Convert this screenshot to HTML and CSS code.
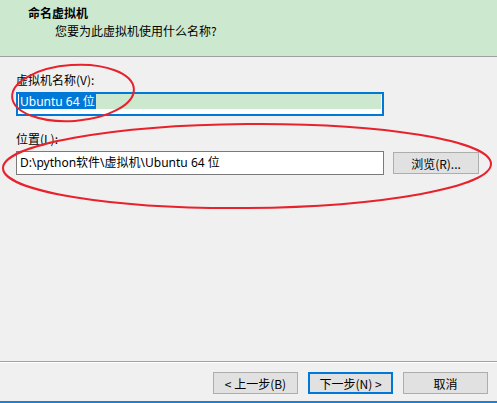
FILE: index.html
```html
<!DOCTYPE html>
<html lang="zh-CN">
<head>
<meta charset="utf-8">
<link rel="stylesheet" href="styles.css">
</head>
<body>
<div class="win">
  <div class="header">
    <div class="title">命名虚拟机</div>
    <div class="subtitle">您要为此虚拟机使用什么名称?</div>
  </div>
  <div class="content">
    <div class="label label-name">虚拟机名称(V):</div>
    <div class="input input-focus">
      <div class="fill"><span class="sel">Ubuntu 64 位</span></div>
    </div>
    <div class="label label-loc">位置(L):</div>
    <div class="row">
      <div class="input input-loc">D:\python软件\虚拟机\Ubuntu 64 位</div>
      <div class="btn btn-browse">浏览(R)...</div>
    </div>
  </div>
  <div class="footer">
    <div class="btn">&lt; 上一步(B)</div>
    <div class="btn btn-default">下一步(N) &gt;</div>
    <div class="btn">取消</div>
  </div>
  <div class="bottomline"></div>
  <svg class="marks" width="497" height="403" viewBox="0 0 497 403">
    <ellipse cx="73" cy="93" rx="61" ry="28" transform="rotate(-4 73 93)" fill="none" stroke="#e8222c" stroke-width="2"/>
    <ellipse cx="247" cy="166" rx="244" ry="42" transform="rotate(-0.5 247 166)" fill="none" stroke="#e8222c" stroke-width="2"/>
  </svg>
</div>
</body>
</html>
```
FILE: styles.css
```css
* { box-sizing: border-box; }
html, body { margin: 0; padding: 0; }
body {
  width: 497px;
  height: 403px;
  overflow: hidden;
  background: #f0f0f0;
  font-family: "Segoe UI", "Noto Sans", "Noto Sans CJK SC", sans-serif;
  font-size: 12px;
  color: #000;
}
.win {
  position: relative;
  width: 497px;
  height: 403px;
  display: flex;
  flex-direction: column;
}
.header {
  height: 57px;
  background: #cce8cf;
  border-bottom: 1px solid #a0a0a0;
  padding: 5px 0 0 28px;
}
.title {
  font-family: "Noto Sans CJK SC", sans-serif;
  font-weight: bold;
  font-size: 12px;
  line-height: 16px;
}
.subtitle {
  font-family: "Noto Sans CJK SC", sans-serif;
  font-size: 12px;
  line-height: 16px;
  margin-top: 2px;
  padding-left: 27px;
}
.content {
  flex: 1;
  padding: 15px 0 0 16px;
}
.label {
  font-family: "Noto Sans CJK SC", sans-serif;
  line-height: 16px;
  height: 16px;
}
.label-name { margin-bottom: 4px; }
.label-loc { margin-top: 15px; margin-bottom: 0; }
.input {
  width: 368px;
  height: 24px;
  background: #fff;
  border: 1px solid #7a7a7a;
}
.input-focus {
  border: 2px solid #0078d7;
  padding: 0 1px;
  display: flex;
  flex-direction: column;
}
.fill {
  height: 15px;
  background: #cce8cf;
  display: flex;
  align-items: stretch;
}
.sel {
  background: #0078d7;
  color: #fff;
  padding: 0 1px;
  line-height: 15px;
  font-size: 12px;
}
.row {
  display: flex;
  align-items: center;
  margin-top: 4px;
}
.input-loc {
  padding: 0 3px;
  line-height: 22px;
  white-space: nowrap;
}
.btn {
  width: 85px;
  height: 22px;
  background: #e1e1e1;
  border: 1px solid #adadad;
  display: flex;
  align-items: center;
  justify-content: center;
  font-family: "Noto Sans CJK SC", sans-serif;
  font-size: 12px;
}
.btn-browse {
  margin-left: 9px;
  width: 86px;
}
.btn-default {
  border: 2px solid #0078d7;
}
.footer {
  height: 40px;
  border-top: 1px solid #a0a0a0;
  box-shadow: inset 0 1px 0 #fff;
  display: flex;
  justify-content: flex-end;
  gap: 10px;
  padding: 10px 9px 0 0;
}
.bottomline {
  height: 2px;
  background: #1f7fd6;
}
.marks {
  position: absolute;
  left: 0;
  top: 0;
  pointer-events: none;
}
```
